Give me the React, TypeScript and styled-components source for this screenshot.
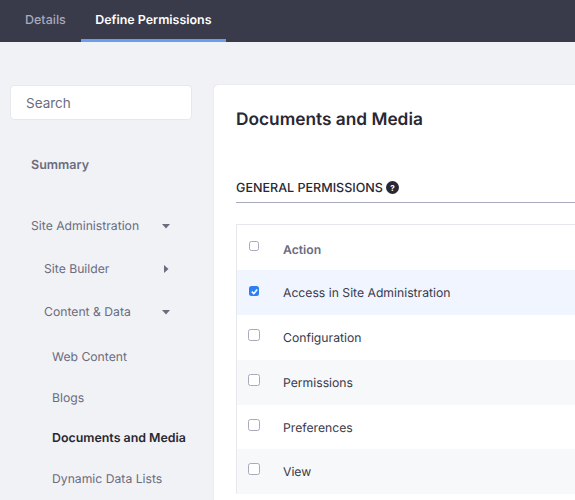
import styled, { createGlobalStyle } from "styled-components";

const GlobalStyle = createGlobalStyle`
    html, body {
        margin: 0;
        height: 100%;
        overflow: hidden;
        background-color: #f1f2f6;
        font-family: Inter, "Liberation Sans", sans-serif;
        text-rendering: geometricPrecision;
    }
    * {
        box-sizing: border-box;
    }
`;

const Page = styled.div`
    width: 575px;
    height: 500px;
    overflow: hidden;
`;

const TopBar = styled.nav`
    display: flex;
    gap: 1.4px;
    height: 42px;
    padding-left: 11px;
    background-color: #393a4a;
`;

const Tab = styled.a<{ $active?: boolean }>`
    display: flex;
    align-items: center;
    height: 42px;
    padding: 2px 14px 0;
    font-size: ${props => (props.$active ? 12.45 : 12.5)}px;
    font-weight: ${props => (props.$active ? 600 : 500)};
    color: ${props => (props.$active ? "#ffffff" : "#a7a9bc")};
    border-bottom: 3px solid ${props => (props.$active ? "#6b9cf0" : "transparent")};
`;

const Body = styled.div`
    display: flex;
    padding: 43px 0 0 10px;
    gap: 21.5px;
`;

const Sidebar = styled.aside`
    flex: 0 0 182px;
    min-width: 0;
`;

const SearchBox = styled.input`
    display: block;
    width: 182px;
    height: 35px;
    padding: 0 15px;
    border: 1px solid #e7e7ed;
    border-radius: 4px;
    background-color: #ffffff;
    font-family: inherit;
    font-size: 13.5px;
    outline: none;

    &::placeholder {
        color: #6b6c7e;
        opacity: 1;
    }
`;

const NavList = styled.ul`
    list-style: none;
    margin: 22px 0 0;
    padding: 0;
`;

const NavItem = styled.li<{ $indent: number; $height: number; $gap?: number; $bold?: boolean; $dark?: boolean }>`
    display: flex;
    align-items: center;
    justify-content: space-between;
    height: ${props => props.$height}px;
    margin-top: ${props => props.$gap ?? 0}px;
    padding-left: ${props => props.$indent}px;
    padding-right: 21px;
    font-size: ${props => (props.$dark ? 12.4 : props.$bold ? 12.5 : 12.2)}px;
    white-space: nowrap;
    font-weight: ${props => (props.$bold ? 600 : 400)};
    color: ${props => (props.$dark ? "#272833" : "#6b6c7e")};
`;

const Card = styled.main`
    flex: 0 0 400px;
    height: 460px;
    padding: 0 0 0 22.5px;
    background-color: #ffffff;
    border-radius: 4px 0 0 0;
    box-shadow: 0 0 1px rgba(39, 40, 51, 0.25);
`;

const Title = styled.h1`
    margin: 0;
    padding-top: 24px;
    height: 85px;
    font-size: 17.3px;
    line-height: 21px;
    font-weight: 600;
    color: #272833;
`;

const SectionHead = styled.h2`
    display: flex;
    align-items: center;
    gap: 3px;
    height: 33px;
    margin: 0 0 21px;
    padding-top: 4px;
    border-bottom: 1px solid #a7a9bc;
    font-size: 12.55px;
    font-weight: 500;
    color: #272833;
`;

const HelpIcon = styled.span`
    display: flex;
    align-items: center;
    justify-content: center;
    width: 13px;
    height: 13px;
    margin-top: -1px;
    border-radius: 50%;
    background-color: #272833;
    color: #ffffff;
    font-size: 8px;
    font-weight: 700;
`;

const Table = styled.div`
    border-top: 1px solid #e7e7ed;
    border-left: 1px solid #e7e7ed;
`;

const Row = styled.div<{ $height: number; $bg: string }>`
    display: flex;
    height: ${props => props.$height}px;
    padding-left: 11px;
    background-color: ${props => props.$bg};
`;

const CheckCell = styled.div`
    flex: 0 0 35px;
    padding-top: 14px;
`;

const CheckBox = styled.span<{ $small?: boolean; $checked?: boolean }>`
    display: flex;
    align-items: center;
    justify-content: center;
    width: ${props => (props.$small ? 10 : 12)}px;
    height: ${props => (props.$small ? 10 : 12)}px;
    margin: ${props => (props.$small ? "2px 0 0 1px" : "0")};
    border-radius: 2.5px;
    border: ${props => (props.$checked ? "none" : "1px solid #a7a9bc")};
    background-color: ${props => (props.$checked ? "#2e7ff0" : "#ffffff")};
`;

const RowLabel = styled.div<{ $head?: boolean }>`
    display: flex;
    align-items: center;
    padding-top: ${props => (props.$head ? 3 : 0)}px;
    font-size: 12.2px;
    font-weight: ${props => (props.$head ? 600 : 400)};
    color: ${props => (props.$head ? "#6b6c7e" : "#393a4a")};
`;

const Caret = ({ right }: { right?: boolean }) => (
    <svg width="10" height="10" viewBox="0 0 10 10">
        <path d={right ? "M3 1 L7.5 5 L3 9 Z" : "M1 3 H9 L5 7.5 Z"} fill="#6b6c7e" />
    </svg>
);

const navItems = [
    { label: "Summary", indent: 21, height: 46, bold: true },
    { label: "Site Administration", indent: 21, height: 43, gap: 16, caret: "down" },
    { label: "Site Builder", indent: 34, height: 43, caret: "right" },
    { label: "Content & Data", indent: 34, height: 43, caret: "down" },
    { label: "Web Content", indent: 42, height: 47 },
    { label: "Blogs", indent: 42, height: 35 },
    { label: "Documents and Media", indent: 42, height: 45, bold: true, dark: true },
    { label: "Dynamic Data Lists", indent: 42, height: 37 },
];

const rows = [
    { label: "Access in Site Administration", height: 45, bg: "#f0f5ff", checked: true },
    { label: "Configuration", height: 45, bg: "#ffffff" },
    { label: "Permissions", height: 45, bg: "#f7f8f9" },
    { label: "Preferences", height: 44, bg: "#ffffff" },
    { label: "View", height: 45, bg: "#f7f8f9" },
];

const App = () => {
    return (
        <Page>
            <GlobalStyle />
            <TopBar>
                <Tab>Details</Tab>
                <Tab $active>Define Permissions</Tab>
            </TopBar>
            <Body>
                <Sidebar>
                    <SearchBox placeholder="Search" readOnly />
                    <NavList>
                        {navItems.map(item => (
                            <NavItem
                                key={item.label}
                                $indent={item.indent}
                                $height={item.height}
                                $gap={item.gap}
                                $bold={item.bold}
                                $dark={item.dark}
                            >
                                {item.label}
                                {item.caret && <Caret right={item.caret === "right"} />}
                            </NavItem>
                        ))}
                    </NavList>
                </Sidebar>
                <Card>
                    <Title>Documents and Media</Title>
                    <SectionHead>
                        GENERAL PERMISSIONS
                        <HelpIcon>?</HelpIcon>
                    </SectionHead>
                    <Table>
                        <Row $height={45} $bg="#ffffff">
                            <CheckCell>
                                <CheckBox $small />
                            </CheckCell>
                            <RowLabel $head>Action</RowLabel>
                        </Row>
                        {rows.map(row => (
                            <Row key={row.label} $height={row.height} $bg={row.bg}>
                                <CheckCell>
                                    <CheckBox $small={row.checked} $checked={row.checked}>
                                        {row.checked && (
                                            <svg width="9" height="9" viewBox="0 0 10 10">
                                                <path d="M2 5.2 L4.2 7.4 L8 2.8" fill="none" stroke="#ffffff" strokeWidth="1.8" />
                                            </svg>
                                        )}
                                    </CheckBox>
                                </CheckCell>
                                <RowLabel>{row.label}</RowLabel>
                            </Row>
                        ))}
                    </Table>
                </Card>
            </Body>
        </Page>
    );
};

export default App;
